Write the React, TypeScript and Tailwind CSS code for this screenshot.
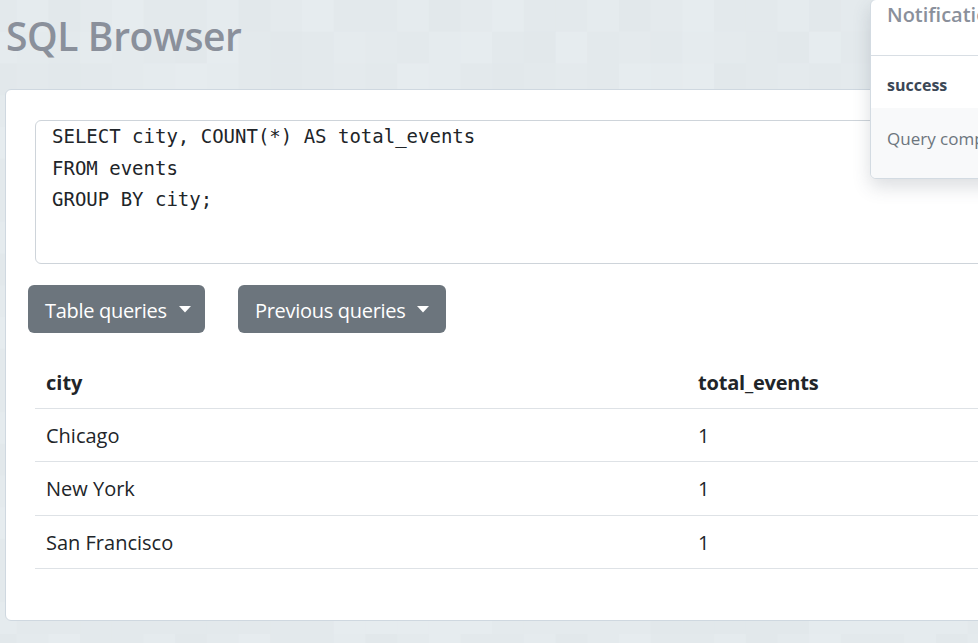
import React from "react";

const shades = ["#e3e9ec", "#e5ebee", "#e2e8eb", "#e4eaed", "#e6ecef", "#e3e9ec"];

function Background() {
  const cols = 32;
  const rows = 21;
  const size = 31.7;
  const rects: React.ReactNode[] = [];
  for (let r = 0; r < rows; r++) {
    for (let c = 0; c < cols; c++) {
      const idx = (r * 7 + c * 13 + ((r * c) % 5)) % shades.length;
      rects.push(
        <rect key={`${r}-${c}`} x={c * size - 15} y={r * size} width={size + 0.5} height={size + 0.5} fill={shades[idx]} />
      );
    }
  }
  return (
    <svg className="absolute inset-0 w-full h-full" xmlns="http://www.w3.org/2000/svg">
      {rects}
    </svg>
  );
}

function Caret() {
  return (
    <svg width="12" height="7" viewBox="0 0 12 7" className="ml-[12px] mb-[2px]">
      <path d="M0 0 L12 0 L6 6.5 Z" fill="#ffffff" />
    </svg>
  );
}

const rows = [
  ["Chicago", "1"],
  ["New York", "1"],
  ["San Francisco", "1"],
];

export default function App() {
  return (
    <div
      className="relative w-[978px] h-[643px] overflow-hidden bg-[#e4eaee]"
      style={{ fontFamily: '"Open Sans", "Noto Sans", sans-serif' }}
    >
      <Background />
      <div className="relative flex flex-col pl-[5px]">
        <h1 className="h-[89px] pt-[12px] pl-[1px] text-[39px] leading-[48px] font-semibold text-[#8a909b] tracking-[-0.4px]">
          SQL Browser
        </h1>
        <div className="w-[1100px] h-[532px] bg-white border border-[#cfd8e0] rounded-[6px] pt-[30px] pl-[22px]">
          <div
            className="ml-[7px] w-[1000px] h-[144px] border border-[#ced4da] rounded-[6px] pl-[16px] text-[19px] leading-[31.5px] text-[#212529]"
            style={{ fontFamily: '"DejaVu Sans Mono", "Liberation Mono", monospace' }}
          >
            <div className="whitespace-pre">SELECT city, COUNT(*) AS total_events</div>
            <div className="whitespace-pre">FROM events</div>
            <div className="whitespace-pre">GROUP BY city;</div>
          </div>
          <div className="flex gap-[33px] mt-[21px]">
            <button className="flex items-center h-[48px] w-[177px] pl-[17px] pt-[3px] rounded-[6px] bg-[#6c757d] text-white text-[20px] tracking-[-0.3px]">
              Table queries
              <Caret />
            </button>
            <button className="flex items-center h-[48px] w-[208px] pl-[17px] pt-[3px] rounded-[6px] bg-[#6c757d] text-white text-[20px] tracking-[-0.3px]">
              Previous queries
              <Caret />
            </button>
          </div>
          <table className="ml-[7px] mt-[24px] w-[1000px] border-collapse text-[20px] text-[#212529]">
            <thead>
              <tr className="border-b border-[#dee2e6]">
                <th className="w-[651px] h-[51px] pl-[11px] pt-[2px] text-left font-bold">city</th>
                <th className="h-[51px] pl-[12px] pt-[2px] text-left font-bold tracking-[-0.2px]">total_events</th>
              </tr>
            </thead>
            <tbody>
              {rows.map(([a, b]) => (
                <tr key={a} className="border-b border-[#dee2e6]">
                  <td className="h-[53.5px] pl-[11px] pt-[2px]">{a}</td>
                  <td className="h-[53.5px] pl-[12px] pt-[2px]">{b}</td>
                </tr>
              ))}
            </tbody>
          </table>
        </div>
      </div>

      <div className="absolute left-[870px] top-[-1px] w-[300px] bg-white border border-[#d3dbe2] rounded-[6px] shadow-[0_8px_18px_rgba(60,70,90,0.18)] overflow-hidden">
        <div className="h-[56px] border-b border-[#d8dee4] pl-[16px] pt-[1px] text-[20px] leading-[28px] text-[#8a909b] font-semibold">
          Notifications
        </div>
        <div className="h-[52px] flex items-center pl-[16px] pt-[6px] text-[16px] font-bold text-[#3b4756]">
          success
        </div>
        <div className="h-[70px] bg-[#f8f9fa] flex items-center pl-[16px] pb-[8px] text-[17px] text-[#6c757d]">
          Query completed successfully
        </div>
      </div>
    </div>
  );
}
